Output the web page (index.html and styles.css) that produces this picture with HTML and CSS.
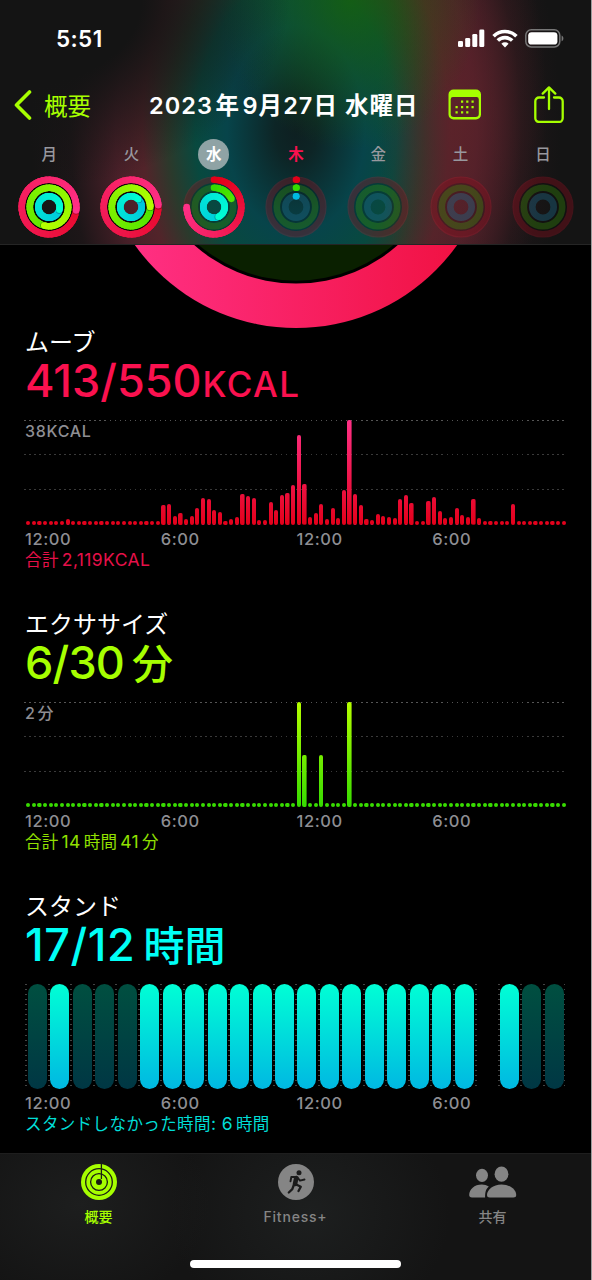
FILE: index.html
```html
<!DOCTYPE html>
<html lang="ja">
<head>
  <meta charset="UTF-8" />
  <meta name="viewport" content="width=device-width, initial-scale=1.0"/>
  <title>アクティビティ</title>
  <link rel="stylesheet" href="styles.css">
</head>
<body>
  <header class="top">
    <div class="status">
      <span class="time">5:51</span>
      <div class="status-icons">
        <svg width="27" height="18" viewBox="0 0 27 18" fill="#fff">
          <rect x="0" y="12" width="5" height="6" rx="1.3"/>
          <rect x="7.2" y="9" width="5" height="9" rx="1.3"/>
          <rect x="14.3" y="5" width="5" height="13" rx="1.3"/>
          <rect x="21.3" y="0.5" width="5" height="17.5" rx="1.3"/>
        </svg>
        <svg width="26" height="19" viewBox="0 0 26 19" fill="none" stroke="#fff" stroke-width="3.6">
          <path d="M1.6 7.2a16.2 16.2 0 0 1 22.8 0"/>
          <path d="M5.8 11.6a10.2 10.2 0 0 1 14.4 0"/>
          <path d="M13 18.4l-3.6-3.7a5.2 5.2 0 0 1 7.2 0z" fill="#fff" stroke="none"/>
        </svg>
        <svg width="40" height="19" viewBox="0 0 40 19">
          <rect x="0.8" y="0.8" width="34" height="17.2" rx="5.5" fill="none" stroke="#777" stroke-width="1.5"/>
          <rect x="3.2" y="3.2" width="29.2" height="12.4" rx="3.4" fill="#fff"/>
          <path d="M36.6 6.5c2.4.8 2.4 5 0 5.8z" fill="#777"/>
        </svg>
      </div>
    </div>

    <nav class="nav">
      <a class="back">
        <svg width="18" height="30" viewBox="0 0 18 30" fill="none" stroke="#a6ff00" stroke-width="3.6" stroke-linecap="round" stroke-linejoin="round"><path d="M15.5 2L2.5 15l13 13"/></svg>
        <span>概要</span>
      </a>
      <h1>2023<i></i>年<i></i>9月27日 水曜日</h1>
      <svg class="calendar" width="34" height="31" viewBox="0 0 34 31" fill="#a6ff00">
        <path fill-rule="evenodd" d="M5.5 0.5h22.500a5 5 0 0 1 5 5v20a5 5 0 0 1-5 5H5.500a5 5 0 0 1-5-5v-20a5 5 0 0 1 5-5zM2.700 10.200v14.600a3.300 3.300 0 0 0 3.300 3.300h21.500a3.300 3.300 0 0 0 3.300-3.300V10.200a2.200 2.200 0 0 0-2.200-2.200H4.900a2.200 2.200 0 0 0-2.200 2.200z"/>
        <path d="M13 11.500h2.200v2.200H13zM18.200 11.500h2.200v2.200h-2.200zM23.500 11.500h2.200v2.200h-2.200zM7.500 17h2.200v2.200H7.500zM13 17h2.200v2.200H13zM18.200 17h2.200v2.200h-2.200zM23.500 17h2.200v2.200h-2.200zM7.500 22.300h2.200v2.200H7.500zM13 22.300h2.200v2.200H13zM18.200 22.300h2.200v2.200h-2.200z"/>
      </svg>
      <svg width="30" height="37" viewBox="0 0 30 37" fill="none" stroke="#a6ff00" stroke-width="2.3" stroke-linecap="round" stroke-linejoin="round">
        <path d="M10 11.500H5a3.700 3.700 0 0 0-3.700 3.700v17A3.700 3.700 0 0 0 5 35.900h20a3.700 3.700 0 0 0 3.700-3.700v-17A3.700 3.700 0 0 0 25 11.500h-5"/>
        <path d="M15 23V1.500M8.700 7.600L15 1.400l6.300 6.200"/>
      </svg>
    </nav>

    <div class="week" id="week"></div>
  </header>

  <main>
    <svg class="hero" width="591" height="84" viewBox="0 244 591 84">
      <defs>
        <linearGradient id="heroMove" x1="0" x2="1" y1="0" y2="0">
          <stop offset="0.1" stop-color="#ff2f82"/>
          <stop offset="0.9" stop-color="#f11244"/>
        </linearGradient>
      </defs>
      <circle cx="296" cy="130" r="198" fill="url(#heroMove)"/>
      <circle cx="296" cy="130" r="153.600" fill="#000"/>
      <circle cx="296" cy="130" r="150.700" fill="#0a2000"/>
    </svg>

    <section class="metric move">
      <h2>ムーブ</h2>
      <p class="value">413/550<small>KCAL</small></p>
      <div class="chart lines">
        <span class="max">38KCAL</span>
        <div class="bars" id="moveBars"></div>
      </div>
      <div class="axis"><span>12:00</span><span>6:00</span><span>12:00</span><span>6:00</span></div>
      <p class="total"><b>合計</b><i></i>2,119KCAL</p>
    </section>

    <section class="metric exercise">
      <h2>エクササイズ</h2>
      <p class="value">6/30<i></i><b>分</b></p>
      <div class="chart lines">
        <span class="max">2<i></i>分</span>
        <div class="bars" id="exerciseBars"></div>
      </div>
      <div class="axis"><span>12:00</span><span>6:00</span><span>12:00</span><span>6:00</span></div>
      <p class="total"><b>合計</b><i></i>14<i></i><b>時間</b><i></i>41<i></i><b>分</b></p>
    </section>

    <section class="metric stand">
      <h2>スタンド</h2>
      <p class="value">17/12<i></i><b>時間</b></p>
      <div class="chart">
        <div class="hours" id="standHours"></div>
      </div>
      <div class="axis"><span>12:00</span><span>6:00</span><span>12:00</span><span>6:00</span></div>
      <p class="total"><b>スタンドしなかった時間</b>: 6<i></i><b>時間</b></p>
    </section>
  </main>

  <footer class="tabbar">
    <div class="tabs">
      <a class="tab active">
        <svg width="36" height="36" viewBox="0 0 36 36">
          <circle cx="18" cy="18" r="18" fill="#a6ff00"/>
          <g fill="none" stroke="#1a1c14" stroke-width="1.300">
            <circle cx="18" cy="18" r="13.300"/>
            <circle cx="18" cy="18" r="8.400"/>
          </g>
          <circle cx="18" cy="18" r="3" fill="#1a1c14"/>
          <path d="M20.400 0v15" stroke="#1a1c14" stroke-width="1.300"/>
        </svg>
        <span>概要</span>
      </a>
      <a class="tab">
        <svg width="36" height="36" viewBox="0 0 36 36">
          <circle cx="18" cy="18" r="18" fill="#858585"/>
          <circle cx="21" cy="8.800" r="2.500" fill="#1b1b1b"/>
          <g fill="none" stroke="#1b1b1b" stroke-linecap="round" stroke-linejoin="round">
            <path d="M18.300 14l-1.300 6" stroke-width="4.600"/>
            <path d="M17 13h-3.700l-.8 4.300M19.500 13.500l2.500 3.200 4.500-1.200" stroke-width="1.900"/>
            <path d="M18.300 20.500l4.500 2.200-2.300 4.300M15.800 21l-1.500 4.200-3.500 3.300" stroke-width="2.300"/>
          </g>
        </svg>
        <span>Fitness+</span>
      </a>
      <a class="tab">
        <svg width="48" height="36" viewBox="0 0 48 36" fill="#858585">
          <ellipse cx="13" cy="11.300" rx="6" ry="6.600"/>
          <ellipse cx="32.500" cy="10.200" rx="6.900" ry="7.600"/>
          <path d="M19.800 22.600C17 25 16 28 16.100 33.500H3c-2 0-2.800-1-2.800-2.500 0-5.500 5.200-10.500 12.600-10.500 2.600 0 5 .7 7 2.100z"/>
          <path d="M32.500 20.500c8.500 0 14.700 5.300 14.700 10.500 0 1.800-1 2.500-2.800 2.500H20.800c-1.900 0-2.800-.8-2.800-2.500 0-5.200 6-10.500 14.500-10.500z"/>
        </svg>
        <span>共有</span>
      </a>
    </div>
    <div class="home-indicator"></div>
  </footer>

  <script src="script.js"></script>
</body>
</html>
```
FILE: styles.css
```css
* {
  box-sizing: border-box;
}
body {
  margin: 0;
  width: 592px;
  height: 1280px;
  overflow: hidden;
  display: flex;
  flex-direction: column;
  background: #000;
  border-right: 1px solid #9a9d9c;
  color: #fff;
  font-family: Inter, 'Noto Sans CJK JP', sans-serif;
}
h1, h2, p {
  margin: 0;
  font-weight: 400;
}
svg {
  display: block;
  flex: none;
}
/* thin gap between digits and kanji */
i {
  display: inline-block;
  width: 3px;
}

/* header */
.top {
  height: 245px;
  flex: none;
  border-bottom: 1px solid #252525;
  background:
    radial-gradient(ellipse 270px 190px at 20px 0, #141414 45%, rgba(20, 20, 20, 0) 100%),
    radial-gradient(ellipse 130px 150px at 350px 0, rgba(24, 100, 8, .75), rgba(24, 100, 8, 0) 100%),
    radial-gradient(ellipse 85px 230px at 462px 110px, rgba(96, 34, 42, .7), rgba(96, 34, 42, 0) 100%),
    radial-gradient(ellipse 265px 400px at 296px 130px, #0e1f21 0, #0d2526 8%, #07444a 26%, #08493f 38%, #2a3a2c 48%, #52242a 58%, #4a2029 68%, #1d1618 85%, #141414 100%);
}
.status {
  height: 76px;
  padding: 0 26px 0 56px;
  display: flex;
  align-items: center;
  justify-content: space-between;
}
.time {
  font-size: 22.5px;
  font-weight: 600;
  letter-spacing: 0.4px;
}
.status-icons {
  display: flex;
  align-items: center;
  gap: 7px;
}
.nav {
  height: 57px;
  padding: 0 27px 0 14px;
  display: flex;
  align-items: center;
}
.back {
  width: 135px;
  display: flex;
  align-items: center;
  gap: 12px;
  color: #a6ff00;
  font-size: 23.5px;
}
.nav h1 {
  width: 299px;
  margin-top: -2px;
  font-size: 23.5px;
  font-weight: 600;
  letter-spacing: 1.05px;
  white-space: nowrap;
}
.nav h1 i {
  width: 2.5px;
}
.calendar {
  margin-right: 52px;
}
.week {
  display: grid;
  grid-template-columns: repeat(7, 82.3px);
  margin-left: 8px;
}
.day {
  display: flex;
  flex-direction: column;
  align-items: center;
  gap: 6px;
}
.day span {
  width: 31px;
  height: 31px;
  margin-top: 6px;
  border-radius: 50%;
  font-size: 15.5px;
  font-weight: 500;
  line-height: 31px;
  text-align: center;
  color: #98989e;
}
.day.selected span {
  background: #8fa3a5;
  color: #fff;
  font-weight: 700;
}
.day.today span {
  color: #fa114f;
  font-weight: 700;
}

/* metrics */
main {
  height: 908px;
  flex: none;
  overflow: hidden;
}
.hero {
  margin-top: -1px;
}
.metric {
  height: 282px;
  padding: 0 25px;
}
.metric h2 {
  font-size: 24px;
  line-height: 30px;
}
.value {
  height: 46px;
  font-size: 45px;
  font-weight: 500;
  line-height: 45px;
  white-space: nowrap;
}
.value small {
  margin-left: 1px;
  font-size: 35px;
  letter-spacing: 1.4px;
}
.value b {
  font-size: 41px;
  font-weight: 500;
  line-height: 1;
  letter-spacing: 0;
}
.value i {
  width: 8px;
}
.chart {
  position: relative;
  height: 105px;
  margin: 16px -1px 0;
  padding: 0 1px;
}
.lines {
  background:
    repeating-linear-gradient(90deg, #555 0 1.5px, transparent 1.5px 5.03px) 0 0 / 100% 1px no-repeat,
    repeating-linear-gradient(90deg, #3a3a3a 0 1.5px, transparent 1.5px 5.03px) 0 34px / 100% 1px no-repeat,
    repeating-linear-gradient(90deg, #3a3a3a 0 1.5px, transparent 1.5px 5.03px) 0 69px / 100% 1px no-repeat;
}
.max {
  position: absolute;
  left: 1px;
  top: 1px;
  font-size: 16px;
  font-weight: 500;
  line-height: 20px;
  letter-spacing: 0.7px;
  color: #8e8e93;
}
.max i {
  width: 2px;
}
.bars {
  height: 105px;
  margin: 0 -0.6px 0 0.4px;
  display: grid;
  grid-template-columns: repeat(96, 1fr);
  align-items: end;
  justify-items: center;
}
.bar {
  width: 4.2px;
  border-radius: 2px;
  background-size: 100% 105px;
  background-position: bottom;
}
.move .bar {
  background-image: linear-gradient(#ff3187, #e3001a);
}
.exercise .bar {
  background-image: linear-gradient(#b6ff00, #35db00);
}
.hours {
  height: 105px;
  margin: 0 1px 0 0.4px;
  display: grid;
  grid-template-columns: repeat(24, 1fr);
}
.hour {
  padding: 0 1.2px 0 2.3px;
  background: repeating-linear-gradient(#444 0 1px, transparent 1px 5.05px) 0 0 / 2px 100% no-repeat;
}
.hour:last-child {
  background:
    repeating-linear-gradient(#444 0 1px, transparent 1px 5.05px) 0 0 / 2px 100% no-repeat,
    repeating-linear-gradient(#444 0 1px, transparent 1px 5.05px) 100% 0 / 1px 100% no-repeat;
}
.hour div {
  height: 105px;
  border-radius: 10px;
}
.hour .on {
  background: linear-gradient(#00ffd5, #00b8e2);
}
.hour .off {
  background: linear-gradient(#004f40, #003744);
}
.axis {
  display: grid;
  grid-template-columns: repeat(4, 1fr);
  margin: 4px -2px 0 0;
  font-size: 16.5px;
  font-weight: 500;
  line-height: 20px;
  letter-spacing: 0.6px;
  color: #8e8e93;
}
.total {
  font-size: 17.5px;
  line-height: 22px;
  letter-spacing: 0.4px;
  white-space: nowrap;
}
.total b {
  font-size: 16.5px;
  font-weight: 400;
}
.exercise .total {
  letter-spacing: 0.3px;
}
.move .value {
  color: #fa114f;
}
.move .total {
  color: #e61049;
}
.exercise .value {
  color: #a6ff00;
  letter-spacing: -0.8px;
}
.exercise .total {
  color: #92e000;
}
.stand .value {
  color: #00fff6;
  letter-spacing: 0.6px;
}
.stand .total {
  color: #00ddd6;
}

/* tab bar */
.tabbar {
  flex: 1;
  display: flex;
  flex-direction: column;
  align-items: center;
  border-top: 1px solid #1e1e1e;
  background:
    radial-gradient(ellipse 130px 100px at 80px 50px, #1d1e1e, rgba(29, 30, 30, 0)),
    radial-gradient(ellipse 140px 120px at 310px 60px, #1d1f1f, rgba(29, 31, 31, 0)),
    #141414;
}
.tabs {
  width: 591px;
  display: grid;
  grid-template-columns: repeat(3, 197px);
  height: 106px;
}
.tab {
  display: flex;
  flex-direction: column;
  align-items: center;
  padding-top: 10px;
  gap: 7px;
  font-size: 14px;
  font-weight: 500;
  line-height: 20px;
  color: #858585;
}
.tab:nth-child(2) {
  letter-spacing: 0.8px;
}
.tab.active {
  color: #a6ff00;
}
.home-indicator {
  width: 211px;
  height: 8px;
  border-radius: 4px;
  background: #fff;
}
```
FILE: script.js
```js
const DAYS = [
  { name: '月', move: 1.27, exercise: 1.54, stand: 1.29 },
  { name: '火', move: 1.24, exercise: 1.25, stand: 1.12 },
  { name: '水', move: 0.75, exercise: 0.18, stand: 1.43, state: 'selected' },
  { name: '木', move: 0.005, exercise: 0.005, stand: 0.005, state: 'today' },
  { name: '金' },
  { name: '土' },
  { name: '日' }
];

const RINGS = [
  { key: 'move', r: 27.3, from: [226, 0, 24], to: [255, 48, 135], track: 'rgba(235,17,45,.22)' },
  { key: 'exercise', r: 19.2, from: [52, 220, 0], to: [180, 255, 0], track: 'rgba(70,180,10,.28)' },
  { key: 'stand', r: 10.7, from: [0, 185, 225], to: [0, 255, 210], track: 'rgba(40,140,180,.3)' }
];

function mix(a, b, t) {
  return 'rgb(' + a.map((v, i) => Math.round(v + (b[i] - v) * t)).join(',') + ')';
}

function point(r, turn) {
  const a = turn * Math.PI * 2;
  return [31 + r * Math.sin(a), 31 - r * Math.cos(a)];
}

function arc(r, a, b, color) {
  const [x1, y1] = point(r, a);
  const [x2, y2] = point(r, b);
  return `<path d="M${x1} ${y1}A${r} ${r} 0 0 1 ${x2} ${y2}" fill="none" stroke="${color}" stroke-width="6.6"/>`;
}

function drawRing(ring, progress) {
  let out = `<circle cx="31" cy="31" r="${ring.r}" fill="none" stroke="${ring.track}" stroke-width="6.6"/>`;
  if (!progress) return out;

  const start = Math.max(0, progress - 1);
  const steps = Math.max(1, Math.ceil((progress - start) * 48));
  const size = (progress - start) / steps;
  const [hx, hy] = point(ring.r, progress);

  if (start === 0) {
    const [x, y] = point(ring.r, 0);
    out += `<circle cx="${x}" cy="${y}" r="3.3" fill="${mix(ring.from, ring.to, 0)}"/>`;
  }
  for (let i = 0; i < steps; i++) {
    const a = start + i * size;
    const end = Math.min(a + size * 2.5, progress);
    out += arc(ring.r, a, end, mix(ring.from, ring.to, Math.min(1, a / Math.max(progress, 0.75))));
  }
  // shadow under the head where it laps the start of the ring
  if (progress > 1) {
    const [sx, sy] = point(ring.r, progress + 0.9 / (ring.r * 6.28));
    out += `<circle cx="${sx}" cy="${sy}" r="3.2" fill="rgba(0,0,0,.3)"/>`;
  }
  out += `<circle cx="${hx}" cy="${hy}" r="3.3" fill="${mix(ring.from, ring.to, Math.min(1, progress / 0.75))}"/>`;
  return out;
}

document.getElementById('week').innerHTML = DAYS.map(day => {
  const shade = day.move > 1 ? 0.75 : 0.15;
  return `<div class="day ${day.state || ''}"><span>${day.name}</span>
    <svg width="62" height="62" viewBox="0 0 62 62">
      <circle cx="31" cy="31" r="18.500" fill="none" stroke="#000" stroke-opacity="${shade}" stroke-width="22"/>
      ${RINGS.map(ring => drawRing(ring, day[ring.key])).join('')}
    </svg></div>`;
}).join('');

// one value per 15 minutes, as bar height
const move = [
  4, 4, 4, 4, 4, 4, 4, 5.7, 4, 4, 4, 4, 4, 4, 4, 4, 4, 4, 4, 4, 4, 4, 4, 4,
  20.3, 20.7, 9, 12, 5.7, 9, 17, 26.7, 25.7, 14.7, 13, 4, 6.3, 7.7, 31, 29.3, 27.3, 4.7, 4.7, 23, 15.3, 30, 32.3, 40,
  89.7, 40.7, 8.3, 12.3, 21, 6, 17, 6.7, 35, 104.7, 30.7, 19.7, 6.3, 4.7, 11.3, 9, 8.3, 7.3, 26.3, 29.7, 22, 4, 4, 24,
  28.3, 14.3, 6.7, 7.7, 16.7, 10, 8, 25.7, 6.7, 4, 4, 4, 4, 4, 21, 4, 4, 4, 4, 4, 4, 4, 4, 4
];
const exercise = new Array(96).fill(4);
exercise[48] = exercise[57] = 105;
exercise[49] = exercise[52] = 52;

function drawBars(id, values) {
  document.getElementById(id).innerHTML =
    values.map(v => `<div class="bar" style="height:${v}px"></div>`).join('');
}
drawBars('moveBars', move);
drawBars('exerciseBars', exercise);

// x = stood, o = idle, - = no data
document.getElementById('standHours').innerHTML =
  [...'oxoooxxxxxxxxxxxxxxx-xoo'].map(h => {
    const state = h === 'x' ? 'on' : h === 'o' ? 'off' : '';
    return `<div class="hour"><div class="${state}"></div></div>`;
  }).join('');
```
